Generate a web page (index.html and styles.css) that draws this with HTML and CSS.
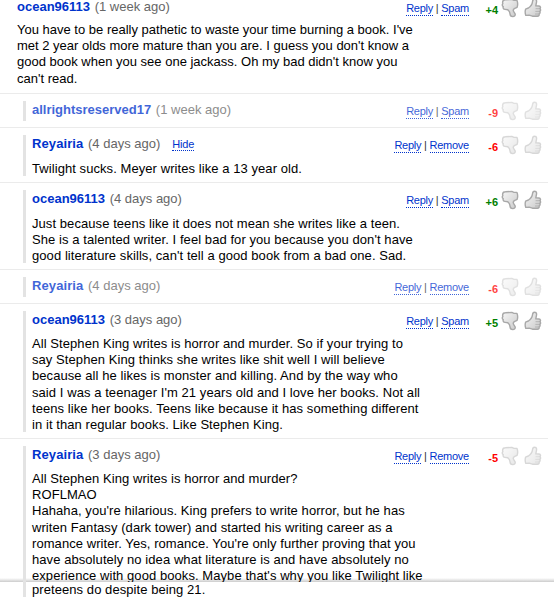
FILE: index.html
```html
<!DOCTYPE html>
<html>
<head>
    <meta charset="UTF-8">
    <title>Comments</title>
    <link rel="stylesheet" href="styles.css">
</head>
<body>
    <svg class="defs" width="0" height="0">
        <defs>
            <linearGradient id="shade" x1="0" y1="0" x2="1" y2="1">
                <stop offset="0" stop-color="#f6f6f6"/>
                <stop offset="1" stop-color="#cacaca"/>
            </linearGradient>
            <symbol id="thumb-up" viewBox="0 0 18 20">
                <path d="M1.6 11.2 L4.4 10 C6.8 8.6 8.2 6.4 8.6 3.4 C8.8 1.7 9.6 1.1 10.7 1.2 C12.3 1.3 12.8 2.5 12.5 4.2 L11.8 7.9 L15 8 C16.7 8.2 16.9 10 15.8 10.7 C17 11.3 16.8 13 15.6 13.4 C16.5 14.2 16.1 15.6 15 16 C15.6 17.1 14.8 18.2 13.4 18.2 L8.4 18.2 L5.2 17.2 L1.8 17.4 C1.1 15.4 1 13 1.6 11.2 Z" fill="url(#shade)" stroke="#a8a8a8" stroke-width="1.4" stroke-linejoin="round"/>
                <path d="M11.6 10.7 H15.4 M11.4 13.4 H15.3 M11 16 H14.6" fill="none" stroke="#b0b0b0" stroke-width=".9"/>
            </symbol>
            <symbol id="thumb-down" viewBox="0 0 18 20">
                <path d="M1.6 4.6 C1.6 2.4 2.6 1.7 4.4 1.7 L10.8 1.4 L13 2.4 L16 2.4 C16.8 4.4 16.8 7.2 16.1 9.4 L13.8 10.4 C12.3 11.2 11.9 12.2 12.6 13.4 L14.1 15.8 C14.6 17.4 13.4 18.6 11.8 18.6 C10 18.6 9 17.6 9 15.8 L8.4 13.6 L6.8 11.7 L4 11.4 C2.3 11.2 1.8 9.8 2.3 8.8 C1.3 7.8 1.1 6.4 1.9 5.6 Z" fill="url(#shade)" stroke="#a8a8a8" stroke-width="1.4" stroke-linejoin="round"/>
            </symbol>
        </defs>
    </svg>

    <div class="comments">
        <div class="comment first">
            <div class="entry">
                <div class="head">
                    <div class="who"><a class="user">ocean96113</a> <span class="time">(1 week ago)</span></div>
                    <div class="actions"><a>Reply</a> | <a>Spam</a></div>
                    <div class="score good">+4</div>
                    <div class="votes"><svg><use href="#thumb-down"/></svg><svg><use href="#thumb-up"/></svg></div>
                </div>
                <div class="text">You have to be really pathetic to waste your time burning a book. I've<br>met 2 year olds more mature than you are. I guess you don't know a<br>good book when you see one jackass. Oh my bad didn't know you<br>can't read.</div>
            </div>
        </div>

        <div class="comment reply low">
            <div class="entry">
                <div class="head">
                    <div class="who"><a class="user">allrightsreserved17</a> <span class="time">(1 week ago)</span></div>
                    <div class="actions"><a>Reply</a> | <a>Spam</a></div>
                    <div class="score bad">-9</div>
                    <div class="votes off"><svg><use href="#thumb-down"/></svg><svg><use href="#thumb-up"/></svg></div>
                </div>
            </div>
        </div>

        <div class="comment reply">
            <div class="entry">
                <div class="head">
                    <div class="who"><a class="user me">Reyairia</a> <span class="time">(4 days ago)</span><a class="hide">Hide</a></div>
                    <div class="actions"><a>Reply</a> | <a>Remove</a></div>
                    <div class="score bad">-6</div>
                    <div class="votes off"><svg><use href="#thumb-down"/></svg><svg><use href="#thumb-up"/></svg></div>
                </div>
                <div class="text short">Twilight sucks. Meyer writes like a 13 year old.</div>
            </div>
        </div>

        <div class="comment reply">
            <div class="entry">
                <div class="head">
                    <div class="who"><a class="user">ocean96113</a> <span class="time">(4 days ago)</span></div>
                    <div class="actions"><a>Reply</a> | <a>Spam</a></div>
                    <div class="score good">+6</div>
                    <div class="votes"><svg><use href="#thumb-down"/></svg><svg><use href="#thumb-up"/></svg></div>
                </div>
                <div class="text medium">Just because teens like it does not mean she writes like a teen.<br>She is a talented writer. I feel bad for you because you don't have<br>good literature skills, can't tell a good book from a bad one. Sad.</div>
            </div>
        </div>

        <div class="comment reply low">
            <div class="entry">
                <div class="head">
                    <div class="who"><a class="user me">Reyairia</a> <span class="time">(4 days ago)</span></div>
                    <div class="actions"><a>Reply</a> | <a>Remove</a></div>
                    <div class="score bad">-6</div>
                    <div class="votes off"><svg><use href="#thumb-down"/></svg><svg><use href="#thumb-up"/></svg></div>
                </div>
            </div>
        </div>

        <div class="comment reply">
            <div class="entry">
                <div class="head">
                    <div class="who"><a class="user">ocean96113</a> <span class="time">(3 days ago)</span></div>
                    <div class="actions"><a>Reply</a> | <a>Spam</a></div>
                    <div class="score good">+5</div>
                    <div class="votes"><svg><use href="#thumb-down"/></svg><svg><use href="#thumb-up"/></svg></div>
                </div>
                <div class="text long">All Stephen King writes is horror and murder. So if your trying to<br>say Stephen King thinks she writes like shit well I will believe<br>because all he likes is monster and killing. And by the way who<br>said I was a teenager I'm 21 years old and I love her books. Not all<br>teens like her books. Teens like because it has something different<br>in it than regular books. Like Stephen King.</div>
            </div>
        </div>

        <div class="edge">
            <div class="comment reply cut">
                <div class="entry">
                    <div class="head">
                        <div class="who"><a class="user me">Reyairia</a> <span class="time">(3 days ago)</span></div>
                        <div class="actions"><a>Reply</a> | <a>Remove</a></div>
                        <div class="score bad">-5</div>
                        <div class="votes off"><svg><use href="#thumb-down"/></svg><svg><use href="#thumb-up"/></svg></div>
                    </div>
                    <div class="text">All Stephen King writes is horror and murder?<br>ROFLMAO<br>Hahaha, you're hilarious. King prefers to write horror, but he has<br>writen Fantasy (dark tower) and started his writing career as a<br>romance writer. Yes, romance. You're only further proving that you<br>have absolutely no idea what literature is and have absolutely no<br>experience with good books. Maybe that's why you like Twilight like</div>
                </div>
            </div>
        </div>

        <div class="comment reply rest">
            <div class="entry">
                <div class="text">preteens do despite being 21.</div>
            </div>
        </div>
    </div>
</body>
</html>
```
FILE: styles.css
```css
body {
    margin: 0;
    height: 600px;
    overflow: hidden;
    background: #fff;
    color: #000;
    font: 13px/16.2px "Liberation Sans", Arial, sans-serif;
}
.defs { display: block; }
.comments { display: flow-root; }

.comment {
    display: flow-root;
    box-sizing: border-box;
    width: 548px;
    padding: 7px 0 6px 23px;
    border-top: 1px solid #ebebeb;
}
.entry {
    box-sizing: border-box;
    padding-left: 6px;
    border-left: 3px solid #e3e3e3;
}

/* top level comment has no bar */
.first { height: 93px; padding: 0 0 0 17px; border-top: 0; }
.first .entry { padding-left: 0; border-left: 0; margin-top: -2px; }
.first .head { height: 19px; }

.head {
    display: flex;
    height: 20px;
    white-space: nowrap;
}
.who { flex: 1; line-height: 17px; }
.user { font-weight: bold; color: #03c; }
.me { letter-spacing: .1px; }
.time { margin-left: 1px; color: #666; }
.hide {
    margin-left: 12px;
    font-size: 11px;
    letter-spacing: -.2px;
    color: #03c;
    border-bottom: 1px dotted #03c;
}
.actions {
    font-size: 11px;
    line-height: 20px;
    letter-spacing: -.25px;
    color: #333;
}
.actions a { padding-bottom: 1px; color: #03c; border-bottom: 1px dotted #03c; }
.score {
    width: 29px;
    font-size: 11px;
    line-height: 25px;
    font-weight: bold;
    text-align: right;
}
.good { color: #008000; }
.bad { color: #f00; }
.votes { display: flex; gap: 5px; padding: 0 6px 0 3px; }
.votes svg { width: 18px; height: 20px; }
.off { opacity: .45; }
.low .who, .low .actions, .low .score { opacity: .75; }
.low .off { opacity: .35; }

.text { box-sizing: border-box; margin-top: 5px; white-space: nowrap; }
.reply .text { letter-spacing: .07px; }
.short { height: 16px; padding-top: 1px; }
.medium { height: 48px; padding-top: 1px; }
.long { height: 96px; }

/* the last comment runs under the bottom edge */
.edge { background: linear-gradient(#fff, #ccc) bottom / 100% 4px no-repeat; }
.cut { height: 144px; padding-bottom: 0; overflow: hidden; }
.rest { padding-top: 0; border-top: 0; }
.rest .text { margin-top: 0; line-height: 15px; }
```
